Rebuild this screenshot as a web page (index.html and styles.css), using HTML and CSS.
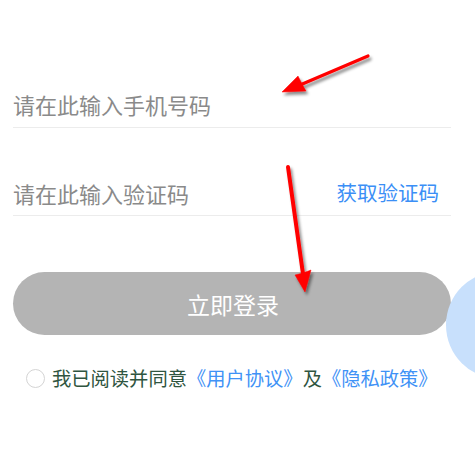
FILE: index.html
```html
<!DOCTYPE html>
<html lang="zh-CN">
<head>
<meta charset="utf-8">
<link rel="stylesheet" href="styles.css">
</head>
<body>
<div class="page">
  <form class="login">
    <div class="field">
      <span class="placeholder">请在此输入手机号码</span>
    </div>
    <div class="field field-code">
      <span class="placeholder">请在此输入验证码</span>
      <span class="get-code">获取验证码</span>
    </div>
    <div class="submit">立即登录</div>
    <div class="agree">
      <span class="check"></span>
      <span class="agree-text">我已阅读并同意<span class="link">《用户协议》</span>及<span class="link">《隐私政策》</span></span>
    </div>
  </form>
  <div class="float-ball"></div>
  <svg class="annotations" width="475" height="469" viewBox="0 0 475 469">
    <defs>
      <filter id="sh" x="-20%" y="-20%" width="140%" height="140%">
        <feDropShadow dx="2" dy="3" stdDeviation="1.8" flood-color="#000" flood-opacity="0.45"/>
      </filter>
    </defs>
    <g filter="url(#sh)" fill="#ff0000" stroke="#ff0000">
      <line x1="368" y1="56" x2="300" y2="85" stroke-width="3.2" stroke-linecap="round"/>
      <polygon points="282,92 298,76 302,84 306,91" stroke-width="0.5"/>
      <line x1="288" y1="167" x2="303" y2="274" stroke-width="4" stroke-linecap="round"/>
      <polygon points="305,292 295,275 303,273 311,270" stroke-width="0.5"/>
    </g>
  </svg>
</div>
</body>
</html>
```
FILE: styles.css
```css
html, body {
  margin: 0;
  padding: 0;
  background: #ffffff;
}
body {
  font-family: "Noto Sans CJK SC", "Noto Sans", sans-serif;
  width: 475px;
  height: 469px;
  overflow: hidden;
}
.page {
  position: relative;
  width: 475px;
  height: 469px;
  overflow: hidden;
}
.login {
  display: flex;
  flex-direction: column;
  padding: 80px 24px 0 13px;
  margin: 0;
}
.field {
  display: flex;
  align-items: center;
  justify-content: space-between;
  height: 47px;
  border-bottom: 1px solid #ececec;
}
.field-code {
  margin-top: 40px;
}
.placeholder {
  font-size: 22px;
  line-height: 22px;
  color: #8a8a8a;
}
.field-code .placeholder {
  padding-top: 2px;
}
.get-code {
  font-size: 20.5px;
  line-height: 20px;
  color: #3b8ff6;
  margin-right: 12px;
}
.submit {
  margin-top: 56px;
  height: 63px;
  border-radius: 32px;
  background: #b4b4b4;
  color: #ffffff;
  font-size: 23px;
  display: flex;
  align-items: center;
  justify-content: center;
  padding-left: 2px;
}
.agree {
  display: flex;
  align-items: center;
  margin-top: 31px;
  padding-left: 13px;
  height: 24px;
}
.check {
  width: 17px;
  height: 17px;
  border: 1px solid #d4d4d4;
  border-radius: 50%;
  margin-right: 7px;
  flex: none;
}
.agree-text {
  font-size: 19.3px;
  line-height: 24px;
  color: #2f5540;
  white-space: nowrap;
}
.link {
  color: #3f92f6;
}
.float-ball {
  position: absolute;
  left: 446px;
  top: 271px;
  width: 108px;
  height: 108px;
  border-radius: 50%;
  background: #c8e0fc;
}
.annotations {
  position: absolute;
  left: 0;
  top: 0;
  pointer-events: none;
}
```
